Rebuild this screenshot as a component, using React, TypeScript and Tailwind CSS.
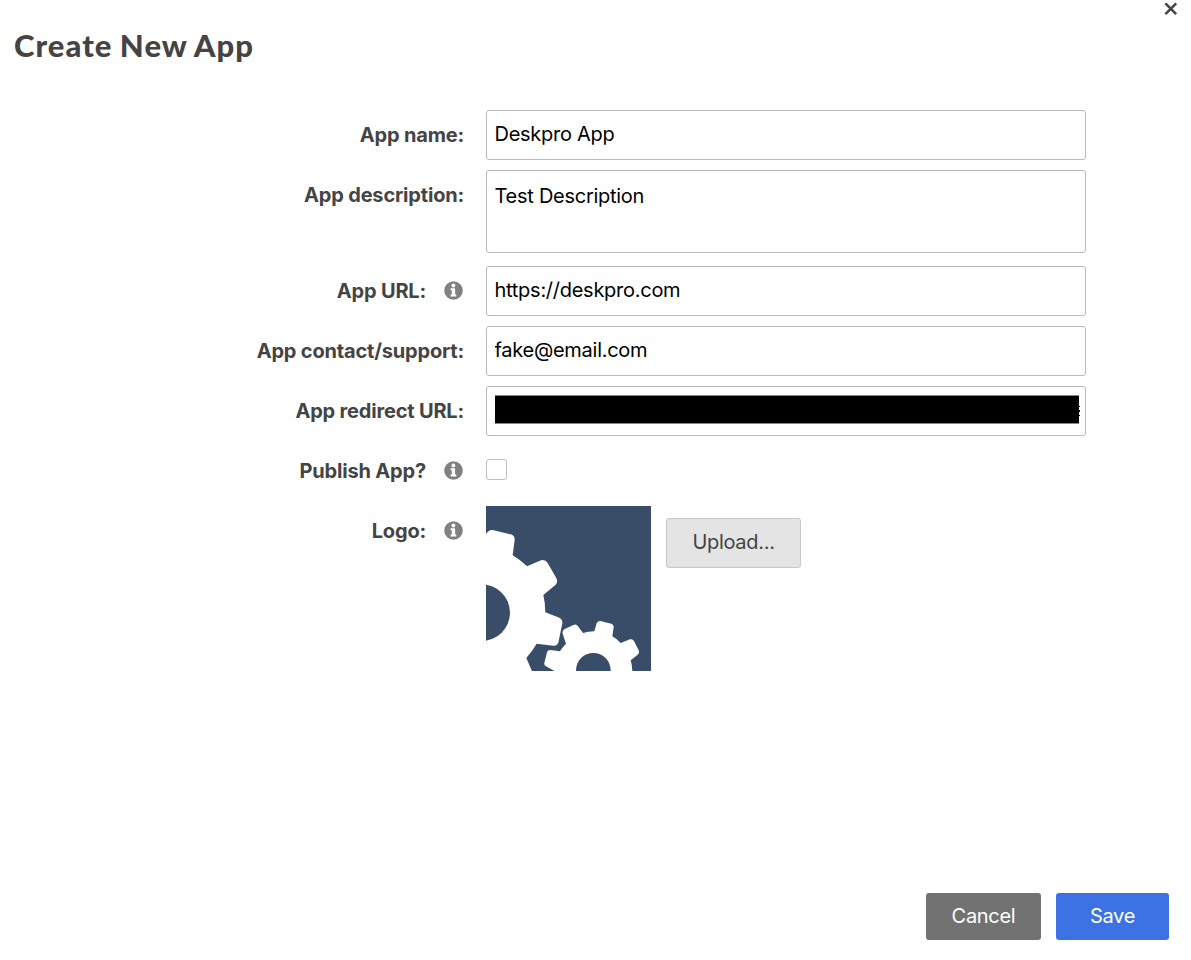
import type { ReactNode } from "react";

function InfoIcon() {
  return (
    <svg className="relative -top-px ml-[18px] mr-px block h-[19px] w-[19px] shrink-0" viewBox="0 0 19 19" role="img" aria-label="Info">
      <circle cx="9.5" cy="9.5" r="9.3" fill="#808080" />
      <circle cx="9.4" cy="4.5" r="1.9" fill="#fff" />
      <path d="M6.6 7.2h4.5v6.2h1.2v2H6.6v-2h1.2V9.2H6.6z" fill="#fff" />
    </svg>
  );
}

function GearsLogo() {
  return (
    <svg className="block h-[165px] w-[165px] shrink-0 bg-[#394d69]" viewBox="18 18 495 495">
      <path
        fill="#fff"
        d="M10 112 L22 97 Q28 89 38 90 L92 103 Q105 107 104 120 L98 166 Q122 180 141 199 L183 181 Q196 178 203 189 L230 236 Q234 246 227 254 L190 285 Q196 310 196 337 L238 353 Q248 358 247 370 L235 428 Q231 438 220 437 L170 431 Q157 453 139 474 L157 516 L10 516 Z"
      />
      <circle cx="5" cy="338" r="85" fill="#394d69" />
      <path
        fill="#fff"
        d="M229 516 L198 499 Q192 496 193 489 L201 457 Q203 450 211 450 L240 454 Q247 442 258 431 L248 401 Q246 393 253 388 L280 375 Q289 371 294 379 L309 399 Q325 395 343 394 L350 370 Q353 363 361 363 L394 371 Q402 374 401 382 L397 409 Q411 417 422 429 L450 418 Q458 416 462 423 L476 451 Q479 459 473 464 L452 481 Q457 497 457 516 Z"
      />
      <circle cx="340" cy="511" r="52" fill="#394d69" />
    </svg>
  );
}

function Row({ label, info, className, children }: { label: string; info?: boolean; className: string; children: ReactNode }) {
  return (
    <div className={`flex items-start ${className}`}>
      <div className="mr-[22px] flex h-[50px] w-[464px] shrink-0 items-center justify-end text-[20px] font-[650] leading-[24px] tracking-[-0.18px] text-[#444]">
        <span className="whitespace-nowrap">{label}</span>
        {info && <InfoIcon />}
      </div>
      {children}
    </div>
  );
}

const field = "block w-[600px] rounded-[3px] border border-[#b9b9b9] bg-white pl-[7.5px] pr-2 text-[20px] tracking-[-0.27px] text-black outline-none";

export default function App() {
  return (
    <main className="flex h-[960px] w-[1191px] flex-col overflow-hidden bg-white font-['Inter',sans-serif]">
      <header className="flex h-[110px] items-start justify-between pl-[14px] pr-[13px]">
        <h1 className="mt-[25px] whitespace-nowrap font-['Lato',sans-serif] text-[31px] font-black leading-[40px] tracking-[1.05px] [word-spacing:-1px] text-[#444]">Create New App</h1>
        <button className="mt-[2px]" aria-label="Close">
          <svg className="block h-[14px] w-[14px]" viewBox="0 0 14 14">
            <path d="M1.4 1.4 L12.2 12.2 M12.2 1.4 L1.4 12.2" stroke="#444" strokeWidth="2.5" />
          </svg>
        </button>
      </header>

      <Row label="App name:" className="h-[60px]">
        <input className={`${field} h-[50px] pb-[2px]`} defaultValue="Deskpro App" />
      </Row>
      <Row label="App description:" className="h-[96px]">
        <textarea className={`${field} h-[83px] resize-none pt-[13px] leading-[24px]`} defaultValue="Test Description" />
      </Row>
      <Row label="App URL:" info className="h-[60px]">
        <input className={`${field} h-[50px] pb-[2px]`} defaultValue="https://deskpro.com" />
      </Row>
      <Row label="App contact/support:" className="h-[60px]">
        <input className={`${field} h-[50px] pb-[2px]`} defaultValue="fake@email.com" />
      </Row>
      <Row label="App redirect URL:" className="h-[60px]">
        <div className="flex h-[50px] w-[600px] items-start rounded-[3px] border border-[#b9b9b9] bg-white pl-2 pt-2">
          <div className="h-[29px] w-[584px] shrink-0 border-y border-[#888] bg-black" />
          <div className="mt-[11px] flex shrink-0 flex-col gap-[3px]">
            <div className="h-px w-px bg-black" />
            <div className="h-[2px] w-px bg-black" />
            <div className="h-px w-px bg-black" />
          </div>
        </div>
      </Row>
      <Row label="Publish App?" info className="h-[60px]">
        <input type="checkbox" className="mt-[13px] h-[21px] w-[21px] appearance-none rounded-[3px] border border-[#c0c0c0] bg-white" />
      </Row>
      <Row label="Logo:" info className="h-[165px]">
        <GearsLogo />
        <button className="ml-[15px] mt-[12px] h-[50px] w-[135px] rounded-[3px] border border-[#c8c8c8] bg-[#e4e4e4] pb-[2px] text-[20px] tracking-[-0.3px] text-[#444]">Upload...</button>
      </Row>

      <footer className="mt-auto flex justify-end gap-[15px] pb-[20px] pr-[22px] text-[20px] tracking-[-0.3px] text-white">
        <button className="h-[47px] w-[115px] rounded-[3px] bg-[#727272] pb-px">Cancel</button>
        <button className="h-[47px] w-[113px] rounded-[3px] bg-[#3c72e4] pb-px">Save</button>
      </footer>
    </main>
  );
}
